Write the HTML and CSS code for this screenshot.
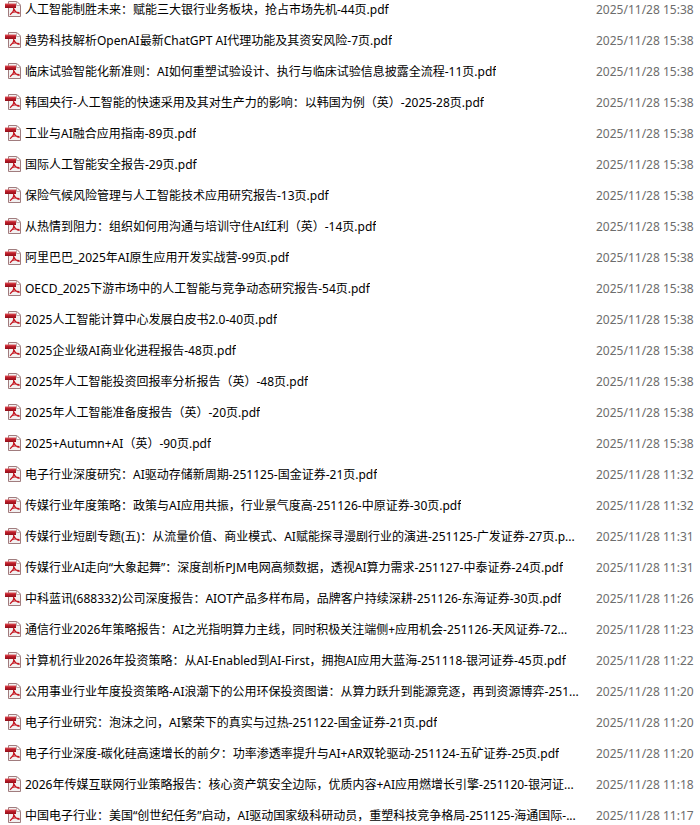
FILE: index.html
```html
<!DOCTYPE html>
<html lang="zh-CN">
<head>
    <meta charset="UTF-8">
    <meta name="viewport" content="width=device-width, initial-scale=1.0">
    <title>文件列表</title>
    <link rel="stylesheet" href="styles.css">
</head>
<body>
    <svg class="sprite" aria-hidden="true">
        <defs>
            <linearGradient id="band" x1="0" y1="0" x2="0" y2="1">
                <stop offset="0" stop-color="#dc5a60"/>
                <stop offset=".4" stop-color="#bf1f2b"/>
                <stop offset="1" stop-color="#8f0d18"/>
            </linearGradient>
        </defs>
        <symbol id="pdf" viewBox="0 0 16 16">
            <path d="M3.5 .5H12L15.5 4V15.5H3.5Z" fill="#f3f1f1" stroke="#a07c7e"/>
            <path d="M11.5 .5V4.5H15.5Z" fill="#fff" stroke="#b59a9b" stroke-width=".8"/>
            <path d="M0 2.5H11V7H0Z" fill="url(#band)"/>
            <path d="M8.5 6.5C9.4 9 8.4 11 5 13.8M9 8C9.8 10.4 11.5 12 14.6 12.4M6.6 11.6C8.6 10.8 11 10.8 14.4 11.6" fill="none" stroke="#c4141f" stroke-width="1.2"/>
        </symbol>
    </svg>

    <table class="files">
        <tbody id="fileList"></tbody>
    </table>

    <script>
        const files = [
            ['人工智能制胜未来：赋能三大银行业务板块，抢占市场先机-44页.pdf', '15:38'],
            ['趋势科技解析OpenAI最新ChatGPT AI代理功能及其资安风险-7页.pdf', '15:38'],
            ['临床试验智能化新准则：AI如何重塑试验设计、执行与临床试验信息披露全流程-11页.pdf', '15:38'],
            ['韩国央行-人工智能的快速采用及其对生产力的影响：以韩国为例（英）-2025-28页.pdf', '15:38'],
            ['工业与AI融合应用指南-89页.pdf', '15:38'],
            ['国际人工智能安全报告-29页.pdf', '15:38'],
            ['保险气候风险管理与人工智能技术应用研究报告-13页.pdf', '15:38'],
            ['从热情到阻力：组织如何用沟通与培训守住AI红利（英）-14页.pdf', '15:38'],
            ['阿里巴巴_2025年AI原生应用开发实战营-99页.pdf', '15:38'],
            ['OECD_2025下游市场中的人工智能与竞争动态研究报告-54页.pdf', '15:38'],
            ['2025人工智能计算中心发展白皮书2.0-40页.pdf', '15:38'],
            ['2025企业级AI商业化进程报告-48页.pdf', '15:38'],
            ['2025年人工智能投资回报率分析报告（英）-48页.pdf', '15:38'],
            ['2025年人工智能准备度报告（英）-20页.pdf', '15:38'],
            ['2025+Autumn+AI（英）-90页.pdf', '15:38'],
            ['电子行业深度研究：AI驱动存储新周期-251125-国金证券-21页.pdf', '11:32'],
            ['传媒行业年度策略：政策与AI应用共振，行业景气度高-251126-中原证券-30页.pdf', '11:32'],
            ['传媒行业短剧专题(五)：从流量价值、商业模式、AI赋能探寻漫剧行业的演进-251125-广发证券-27页.p...', '11:31'],
            ['传媒行业AI走向“大象起舞”：深度剖析PJM电网高频数据，透视AI算力需求-251127-中泰证券-24页.pdf', '11:31'],
            ['中科蓝讯(688332)公司深度报告：AIOT产品多样布局，品牌客户持续深耕-251126-东海证券-30页.pdf', '11:26'],
            ['通信行业2026年策略报告：AI之光指明算力主线，同时积极关注端侧+应用机会-251126-天风证券-72...', '11:23'],
            ['计算机行业2026年投资策略：从AI-Enabled到AI-First，拥抱AI应用大蓝海-251118-银河证券-45页.pdf', '11:22'],
            ['公用事业行业年度投资策略-AI浪潮下的公用环保投资图谱：从算力跃升到能源竞逐，再到资源博弈-251...', '11:20'],
            ['电子行业研究：泡沫之问，AI繁荣下的真实与过热-251122-国金证券-21页.pdf', '11:20'],
            ['电子行业深度-碳化硅高速增长的前夕：功率渗透率提升与AI+AR双轮驱动-251124-五矿证券-25页.pdf', '11:20'],
            ['2026年传媒互联网行业策略报告：核心资产筑安全边际，优质内容+AI应用燃增长引擎-251120-银河证...', '11:18'],
            ['中国电子行业：美国“创世纪任务”启动，AI驱动国家级科研动员，重塑科技竞争格局-251125-海通国际-...', '11:17']
        ];

        document.getElementById('fileList').innerHTML = files.map(([name, time]) => `
            <tr>
                <td class="name"><div class="file"><svg class="icon" aria-hidden="true"><use href="#pdf"/></svg><span class="label">${name}</span></div></td>
                <td class="date">2025/11/28 ${time}</td>
            </tr>`).join('');
    </script>
</body>
</html>
```

FILE: styles.css
```css
body {
    margin: 0;
    height: 100vh;
    overflow: hidden;
    background: #fff;
    font-family: "Noto Sans", "Noto Sans CJK SC", sans-serif;
    font-size: 12px;
    color: #000;
}
.sprite {
    position: absolute;
    width: 0;
    height: 0;
}
/* list is scrolled slightly past its first row */
.files {
    width: 100%;
    margin-top: -6px;
    table-layout: fixed;
    border-collapse: collapse;
}
.files td {
    padding: 7px 0 6px;
    line-height: 18px;
    white-space: nowrap;
}
.file {
    display: flex;
    align-items: flex-start;
    gap: 4px;
    padding-left: 5px;
}
.icon {
    flex: none;
    width: 16px;
    height: 16px;
}
.label {
    overflow: hidden;
    text-overflow: ellipsis;
}
.files .date {
    width: 104px;
    color: #6d6d6d;
}
```
